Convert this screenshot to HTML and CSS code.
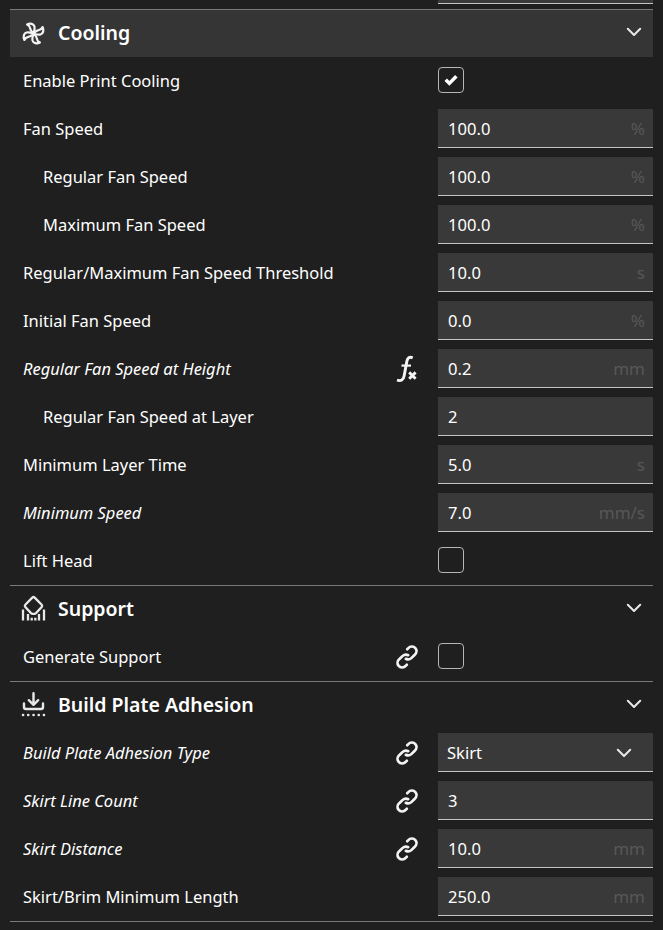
FILE: index.html
```html
<!DOCTYPE html>
<html lang="en">
<head>
<meta charset="utf-8">
<title>Print settings</title>
<link rel="stylesheet" href="styles.css">
</head>
<body>
<svg class="defs" width="0" height="0" aria-hidden="true">
  <symbol id="link" viewBox="0 0 24 24"><g fill="none" stroke="#f4f4f4" stroke-width="2.7" stroke-linecap="round"><path d="M12.200 4.200l1.100-1.100a4.700 4.700 0 0 1 7.200.2a4.700 4.700 0 0 1-.7 6.400l-3.500 3.400a4.700 4.700 0 0 1-5.500.7"/><path d="M11.800 19.800l-1.100 1.100a4.700 4.700 0 0 1-7.200-.2a4.700 4.700 0 0 1 .7-6.400l3.500-3.400a4.700 4.700 0 0 1 5.500-.7"/></g></symbol>
  <symbol id="chevron" viewBox="0 0 16 10"><path d="M1.800 1.800L8 8l6.200-6.200" fill="none" stroke="#e8e8e8" stroke-width="2" stroke-linecap="round" stroke-linejoin="round"/></symbol>
  <symbol id="blade" viewBox="0 0 24 24"><path d="M12 12C9.500 9.800 8.600 8 8.400 6.200C8.200 4.400 7 3.600 5.600 2.900C8.600 1.400 12.200 2.200 13 5C13.600 7.500 12.700 9.800 12 12z" fill="none" stroke="#f4f4f4" stroke-width="2.200" stroke-linejoin="round"/></symbol>
</svg>
<main class="panel">
  <div class="clipped"><div class="field"></div></div>

  <header class="head active">
    <svg class="icon" viewBox="0 0 24 24"><g transform="translate(.5 .5)"><use href="#blade" width="24" height="24"/><use href="#blade" width="24" height="24" transform="rotate(90 12 12)"/><use href="#blade" width="24" height="24" transform="rotate(180 12 12)"/><use href="#blade" width="24" height="24" transform="rotate(270 12 12)"/></g></svg>
    <h2>Cooling</h2><svg class="chev"><use href="#chevron"/></svg>
  </header>
  <div class="row"><label>Enable Print Cooling</label><span class="check"><svg viewBox="0 0 12 10"><path d="M1.500 4.800L4.600 7.900L10.600 1.800" fill="none" stroke="#fff" stroke-width="3"/></svg></span></div>
  <div class="row"><label>Fan Speed</label><div class="field"><span>100.0</span><i>%</i></div></div>
  <div class="row sub"><label>Regular Fan Speed</label><div class="field"><span>100.0</span><i>%</i></div></div>
  <div class="row sub"><label>Maximum Fan Speed</label><div class="field"><span>100.0</span><i>%</i></div></div>
  <div class="row"><label>Regular/Maximum Fan Speed Threshold</label><div class="field"><span>10.0</span><i>s</i></div></div>
  <div class="row"><label>Initial Fan Speed</label><div class="field"><span>0.0</span><i>%</i></div></div>
  <div class="row changed"><label>Regular Fan Speed at Height</label><svg class="state" viewBox="0 0 24 24"><g fill="none" stroke="#f4f4f4" stroke-width="2.900"><path d="M17.700 .8C14.300-.6 12.500 1.100 11.900 4.100L9.100 19.100C8.500 22.900 6 24.400 2 23.200"/><path d="M6.500 8.600H16" stroke-width="2.200"/><path d="M14.200 15.400L20.600 21.800M20.600 15.400L14.200 21.800"/></g></svg><div class="field"><span>0.2</span><i>mm</i></div></div>
  <div class="row sub"><label>Regular Fan Speed at Layer</label><div class="field"><span>2</span></div></div>
  <div class="row"><label>Minimum Layer Time</label><div class="field"><span>5.0</span><i>s</i></div></div>
  <div class="row changed"><label>Minimum Speed</label><div class="field"><span>7.0</span><i>mm/s</i></div></div>
  <div class="row"><label>Lift Head</label><span class="check"></span></div>

  <header class="head">
    <svg class="icon" viewBox="0 0 24 24"><g fill="none" stroke="#e8e8e8" stroke-width="2.300"><path stroke-linejoin="round" d="M11.300 .6Q12.500-.5 13.700 .6L20.700 7.800Q21.700 8.900 20.700 10L15 16.100Q14.300 16.800 13.300 16.800H11.700Q10.700 16.800 10 16.100L4.300 10Q3.300 8.900 4.300 7.800z"/><path d="M2 12.500V23.500M7 17V23.500M10.700 20.800V23.500M14.300 20.800V23.500M18 17V23.500M23 12.500V23.500"/></g></svg>
    <h2>Support</h2><svg class="chev"><use href="#chevron"/></svg>
  </header>
  <div class="row"><label>Generate Support</label><svg class="state"><use href="#link"/></svg><span class="check"></span></div>

  <header class="head">
    <svg class="icon" viewBox="0 0 24 24"><g fill="none" stroke="#e8e8e8" stroke-width="2.400" stroke-linecap="round" stroke-linejoin="round"><path d="M12.500 .2V11M7.800 7.200L12.500 11.800L17.200 7.200M3 10.500V14Q3 16 5 16H20Q22 16 22 14V10.500"/><path d="M2 22h.1M7.200 22h.1M12.500 22h.1M17.700 22h.1M22.900 22h.1" stroke-width="2.600"/></g></svg>
    <h2>Build Plate Adhesion</h2><svg class="chev"><use href="#chevron"/></svg>
  </header>
  <div class="row changed"><label>Build Plate Adhesion Type</label><svg class="state"><use href="#link"/></svg><div class="field select"><span>Skirt</span><svg class="chev"><use href="#chevron"/></svg></div></div>
  <div class="row changed"><label>Skirt Line Count</label><svg class="state"><use href="#link"/></svg><div class="field"><span>3</span></div></div>
  <div class="row changed"><label>Skirt Distance</label><svg class="state"><use href="#link"/></svg><div class="field"><span>10.0</span><i>mm</i></div></div>
  <div class="row"><label>Skirt/Brim Minimum Length</label><div class="field"><span>250.0</span><i>mm</i></div></div>
  <div class="end"></div>
</main>
</body>
</html>
```
FILE: styles.css
```css
* { box-sizing: border-box; }
body { margin: 0; background: #1f1f1f; color: #fff; font: 17px/23px "Noto Sans", sans-serif; height: 930px; overflow: hidden; }
.defs { display: block; height: 0; }
.panel { padding: 0 10px; }
.clipped { height: 9px; display: flex; justify-content: flex-end; overflow: hidden; }
.clipped .field { height: 4px; margin-top: 0; }
.head { height: 48px; border-top: 1px solid #7a7a7a; display: flex; align-items: center; padding: 0 11px; }
.head.active { background: #353535; }
.head h2 { margin: 0 auto 2px 13px; font-size: 19.500px; font-weight: 600; line-height: 27px; }
.icon { width: 24px; height: 24px; margin-bottom: 2px; overflow: visible; }
.chev { width: 16px; height: 10px; flex: none; }
.head .chev { margin-bottom: 3px; }
.row { height: 48px; display: flex; align-items: center; padding-left: 13px; }
.row.sub { padding-left: 33px; }
.row label { flex: 1; white-space: nowrap; padding-bottom: 1px; transform: scaleX(.969); transform-origin: left; }
.changed label { font-style: italic; }
.state { width: 24px; height: 24px; flex: none; margin: 0 19px 1px 0; overflow: visible; }
.field { width: 215px; height: 39px; margin-top: -1px; flex: none; background: #393939; border-bottom: 1px solid #c4c4c4; display: flex; align-items: center; justify-content: space-between; padding: 1px 8px 0 10px; }
.clipped .field { padding: 0; }
.field span { transform: scaleX(.975); transform-origin: left; }
.field i { font-style: normal; color: #575757; }
.field.select { padding: 1px 21px 0 9px; }
.check { width: 26px; height: 26px; margin: 0 189px 2px 0; flex: none; border: 1.500px solid #b5b5b5; border-radius: 4px; display: grid; place-items: center; }
.check svg { width: 14px; height: 12px; }
.end { border-top: 1px solid #7a7a7a; }
```
